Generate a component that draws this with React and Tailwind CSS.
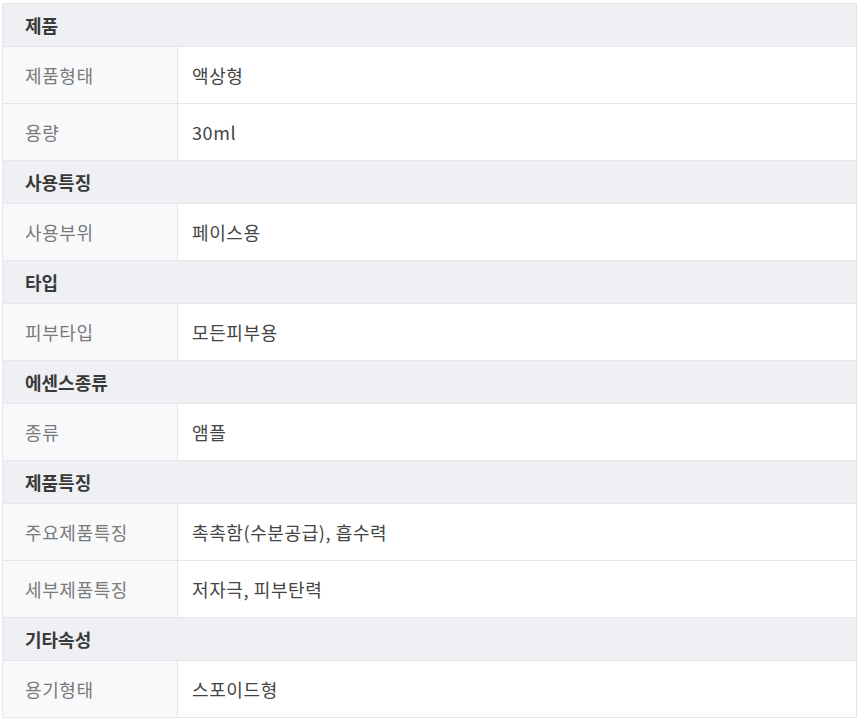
import React from 'react';

const sections = [
  { title: '제품', rows: [['제품형태', '액상형'], ['용량', '30ml']] },
  { title: '사용특징', rows: [['사용부위', '페이스용']] },
  { title: '타입', rows: [['피부타입', '모든피부용']] },
  { title: '에센스종류', rows: [['종류', '앰플']] },
  { title: '제품특징', rows: [['주요제품특징', '촉촉함(수분공급), 흡수력'], ['세부제품특징', '저자극, 피부탄력']] },
  { title: '기타속성', rows: [['용기형태', '스포이드형']] },
];

export default function App() {
  return (
    <div
      className="w-[860px] h-[722px] bg-white pt-[3px] pl-[2px] pr-[3px]"
      style={{ fontFamily: '"Noto Sans CJK KR", "Noto Sans", sans-serif' }}
    >
      <div className="border border-[#e4e6ea] border-b-0">
        {sections.map((s) => (
          <div key={s.title}>
            <div className="h-[43px] flex items-center px-[22px] bg-[#eef0f4] border-b border-[#e4e6ea] text-[18px] font-bold text-[#3a3a3a]">
              {s.title}
            </div>
            {s.rows.map(([k, v]) => (
              <div key={k} className="h-[57px] flex border-b border-[#e4e6ea] text-[18px] tracking-[0.6px]">
                <div className="w-[175px] shrink-0 flex items-center px-[22px] bg-[#f8f9fb] border-r border-[#e4e6ea] text-[#7a7a7a]">
                  {k}
                </div>
                <div className="flex-1 flex items-center px-[14px] bg-white text-[#444]">{v}</div>
              </div>
            ))}
          </div>
        ))}
      </div>
    </div>
  );
}
